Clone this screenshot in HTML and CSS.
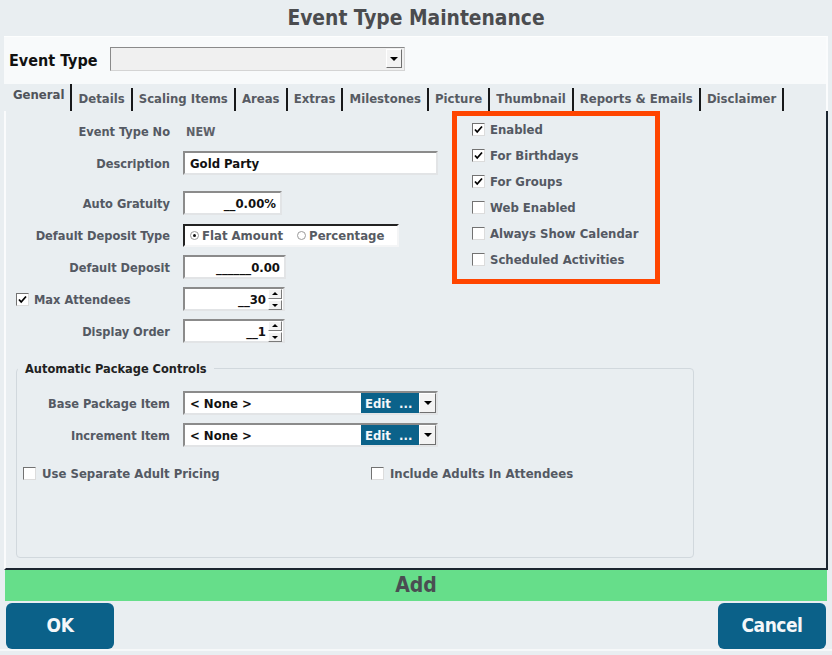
FILE: index.html
```html
<!DOCTYPE html>
<html lang="en">
<head>
<meta charset="UTF-8" />
<title>Event Type Maintenance</title>
<link rel="stylesheet" href="styles.css">
</head>
<body>

<div class="screen">
  <h1 class="title">Event Type Maintenance</h1>

  <div class="type-bar">
    <span class="type-label">Event Type</span>
    <div class="select"><span class="drop-btn"><i class="tri"></i></span></div>
  </div>

  <nav class="tabs">
    <span class="tab active">General</span>
    <span class="tab">Details</span>
    <span class="tab">Scaling Items</span>
    <span class="tab">Areas</span>
    <span class="tab">Extras</span>
    <span class="tab">Milestones</span>
    <span class="tab">Picture</span>
    <span class="tab">Thumbnail</span>
    <span class="tab">Reports &amp; Emails</span>
    <span class="tab">Disclaimer</span>
  </nav>

  <section class="tab-body">
    <div class="top-area">
      <div class="form-col">
        <div class="row">
          <span class="lbl">Event Type No</span>
          <span class="value">NEW</span>
        </div>
        <div class="row gap-after">
          <span class="lbl">Description</span>
          <div class="field w-desc left">Gold Party</div>
        </div>
        <div class="row">
          <span class="lbl">Auto Gratuity</span>
          <div class="field w-grat">__0.00%</div>
        </div>
        <div class="row">
          <span class="lbl">Default Deposit Type</span>
          <div class="radio-box">
            <span class="radio on"></span><span class="radio-text">Flat Amount</span>
            <span class="radio"></span><span class="radio-text">Percentage</span>
          </div>
        </div>
        <div class="row">
          <span class="lbl">Default Deposit</span>
          <div class="field w-dep">______0.00</div>
        </div>
        <div class="row">
          <span class="lbl lbl-check"><span class="cb checked"><svg viewBox="0 0 11 11"><path d="M2 5.5l2.2 2.5 4.8-5.5"/></svg></span>Max Attendees</span>
          <div class="field w-spin">__30<span class="spin"><i class="up"></i><i class="down"></i></span></div>
        </div>
        <div class="row">
          <span class="lbl">Display Order</span>
          <div class="field w-spin">__1<span class="spin"><i class="up"></i><i class="down"></i></span></div>
        </div>
      </div>

      <div class="flags">
        <div class="flag"><span class="cb checked"><svg viewBox="0 0 11 11"><path d="M2 5.5l2.2 2.5 4.8-5.5"/></svg></span>Enabled</div>
        <div class="flag"><span class="cb checked"><svg viewBox="0 0 11 11"><path d="M2 5.5l2.2 2.5 4.8-5.5"/></svg></span>For Birthdays</div>
        <div class="flag"><span class="cb checked"><svg viewBox="0 0 11 11"><path d="M2 5.5l2.2 2.5 4.8-5.5"/></svg></span>For Groups</div>
        <div class="flag"><span class="cb"></span>Web Enabled</div>
        <div class="flag"><span class="cb"></span>Always Show Calendar</div>
        <div class="flag"><span class="cb"></span>Scheduled Activities</div>
      </div>
    </div>

    <fieldset class="pkg">
      <legend>Automatic Package Controls</legend>
      <div class="row">
        <span class="lbl">Base Package Item</span>
        <div class="combo">
          <span class="combo-text">&lt; None &gt;</span>
          <span class="edit">Edit &nbsp;...</span>
          <span class="drop-btn"><i class="tri"></i></span>
        </div>
      </div>
      <div class="row">
        <span class="lbl">Increment Item</span>
        <div class="combo">
          <span class="combo-text">&lt; None &gt;</span>
          <span class="edit">Edit &nbsp;...</span>
          <span class="drop-btn"><i class="tri"></i></span>
        </div>
      </div>
      <div class="check-row">
        <span class="check-item first"><span class="cb"></span>Use Separate Adult Pricing</span>
        <span class="check-item"><span class="cb"></span>Include Adults In Attendees</span>
      </div>
    </fieldset>
  </section>

  <div class="add-bar">Add</div>

  <footer class="actions">
    <button class="btn">OK</button>
    <button class="btn">Cancel</button>
  </footer>
</div>

</body>
</html>
```

FILE: styles.css
```css
* {
  box-sizing: border-box;
}
body {
  margin: 0;
  background: #e9eef1;
  font-family: "DejaVu Sans Condensed", "DejaVu Sans", sans-serif;
  font-weight: bold;
  font-size: 13px;
  color: #545963;
}
.screen {
  height: 655px;
  overflow: hidden;
}

/* Title */
.title {
  margin: 0;
  height: 36px;
  line-height: 36px;
  text-align: center;
  font-size: 20.8px;
  color: #4b4c4f;
}

/* Event type selector */
.type-bar {
  height: 48px;
  margin: 0 4px;
  display: flex;
  align-items: center;
  padding-left: 5px;
  background: #f8fafb;
  border-top: 1px solid #fdfefe;
  border-right: 2px solid #fbfcfd;
}
.type-label {
  font-size: 16px;
  color: #111;
  width: 101px;
}
.select {
  width: 295px;
  height: 24px;
  margin-bottom: 4px;
  background: #f0f0f0;
  border: 1px solid;
  border-color: #8a8a8a #d4d4d4 #d4d4d4 #8a8a8a;
  display: flex;
  justify-content: flex-end;
  align-items: center;
  padding-right: 2px;
}
.drop-btn {
  width: 16px;
  height: 19px;
  background: #f3f3f3;
  border: 1px solid;
  border-color: #fff #6f6f6f #6f6f6f #fff;
  display: flex;
  align-items: center;
  justify-content: center;
}
.tri {
  width: 0;
  height: 0;
  border-left: 4px solid transparent;
  border-right: 4px solid transparent;
  border-top: 4px solid #000;
}

/* Tabs */
.tabs {
  height: 27px;
  margin: 0 4px;
  display: flex;
  align-items: flex-end;
  padding-left: 2px;
  border-right: 2px solid #fbfcfd;
}
.tab {
  height: 23px;
  line-height: 22px;
  padding: 0 6px 0 6.1px;
  border-right: 2px solid #17181a;
  color: #575b63;
}
.tab.active {
  height: 27px;
  line-height: 22px;
  padding-left: 7px;
  color: #4f535a;
}

/* Tab page */
.tab-body {
  height: 459px;
  margin: 0 4px;
  border-left: 2px solid #fafbfc;
  border-right: 2px solid #1c2630;
  border-bottom: 2px solid #1c2630;
}
.top-area {
  display: flex;
  align-items: flex-start;
}
.form-col {
  width: 446px;
  padding-top: 4px;
}
.row {
  height: 32px;
  display: flex;
  align-items: center;
}
.row.gap-after {
  margin-bottom: 8px;
}
.lbl {
  width: 164px;
  margin-right: 13px;
  text-align: right;
  white-space: nowrap;
  font-size: 12.7px;
}
.lbl-check {
  display: flex;
  align-items: center;
  text-align: left;
  padding-left: 10px;
}
.lbl-check .cb {
  margin-right: 5px;
}
.value {
  color: #5d6169;
  padding-left: 3px;
  font-size: 12.5px;
}
.field {
  height: 24px;
  background: #fff;
  border: 2px solid;
  border-color: #8b8b8b #e2e4e6 #e2e4e6 #8b8b8b;
  color: #111;
  display: flex;
  align-items: center;
  justify-content: flex-end;
  padding: 0 4px;
}
.field.left {
  justify-content: flex-start;
  padding-left: 5px;
}
.w-desc { width: 255px; }
.w-grat { width: 99px; }
.w-dep  { width: 103px; }
.w-spin { width: 102px; padding-right: 1px; }

.spin {
  display: flex;
  flex-direction: column;
  gap: 1px;
  margin-left: 2px;
}
.spin i {
  width: 14px;
  height: 10px;
  background: #f2f2f2;
  border: 1px solid;
  border-color: #fff #7a7a7a #7a7a7a #fff;
  position: relative;
}
.spin i::after {
  content: "";
  position: absolute;
  left: 3px;
  top: 2px;
  border-left: 3px solid transparent;
  border-right: 3px solid transparent;
}
.spin .up::after {
  border-bottom: 3px solid #000;
}
.spin .down::after {
  top: 3px;
  border-top: 3px solid #000;
}

.radio-box {
  width: 216px;
  height: 23px;
  background: #fff;
  border: 2px solid;
  border-color: #222 #f4f5f6 #f4f5f6 #222;
  display: flex;
  align-items: center;
  padding-left: 5px;
  white-space: nowrap;
}
.radio {
  flex: none;
  width: 9px;
  height: 9px;
  border-radius: 50%;
  border: 1px solid #9a9a9a;
  background: #fff;
  margin-right: 3px;
  display: flex;
  align-items: center;
  justify-content: center;
}
.radio.on::after {
  content: "";
  width: 3px;
  height: 3px;
  border-radius: 50%;
  background: #111;
}
.radio-text {
  flex: none;
  color: #575b63;
  margin-right: 14px;
}

/* Checkboxes */
.cb {
  width: 13px;
  height: 13px;
  flex: none;
  background: #fff;
  border: 1px solid;
  border-color: #727272 #dcdcdc #dcdcdc #727272;
  display: inline-flex;
}
.cb svg {
  width: 11px;
  height: 11px;
}
.cb path {
  fill: none;
  stroke: #000;
  stroke-width: 1.8;
}

.flags {
  width: 208px;
  height: 173px;
  border: 5px solid #ff4500;
  padding: 0 0 0 15px;
}
.flag {
  height: 26px;
  display: flex;
  align-items: center;
}
.flag .cb {
  margin-right: 5px;
}

/* Package group */
.pkg {
  margin: 14px 0 0 10px;
  width: 678px;
  height: 197px;
  border: 1px solid #d1d8dd;
  border-radius: 4px;
  padding: 11px 0 0 0;
}
.pkg legend {
  padding: 0 7px;
  margin-left: 1px;
  color: #222;
  font-size: 12.7px;
}
.pkg .lbl {
  width: 153px;
}
.combo {
  width: 255px;
  height: 24px;
  background: #fff;
  border: 2px solid;
  border-color: #8b8b8b #e2e4e6 #e2e4e6 #8b8b8b;
  display: flex;
  align-items: stretch;
}
.combo-text {
  flex: 1;
  display: flex;
  align-items: center;
  padding-left: 5px;
  color: #111;
}
.edit {
  width: 58px;
  background: #0b628a;
  color: #f4f8fa;
  display: flex;
  align-items: center;
  padding-left: 4px;
}
.combo .drop-btn {
  height: auto;
  width: 17px;
}
.check-row {
  display: flex;
  margin-top: 9px;
  height: 26px;
  align-items: center;
}
.check-item {
  display: flex;
  align-items: center;
}
.check-item .cb {
  margin-right: 6px;
}
.check-item.first {
  width: 354px;
  padding-left: 6px;
}

/* Add bar */
.add-bar {
  height: 31px;
  margin: 0 5px;
  background: #66de8a;
  text-align: center;
  line-height: 31px;
  font-family: "Liberation Sans Narrow", "DejaVu Sans Condensed", sans-serif;
  font-size: 21px;
  color: #4a4e52;
}

/* Footer buttons */
.actions {
  display: flex;
  justify-content: space-between;
  padding: 2px 6px 0 6px;
  height: 50px;
  border-bottom: 2px solid #f6f8f9;
}
.btn {
  width: 108px;
  height: 46px;
  border: none;
  border-radius: 6px;
  background: #0b6189;
  color: #f4f7f9;
  font-family: "Liberation Sans Narrow", "DejaVu Sans Condensed", sans-serif;
  font-weight: bold;
  font-size: 19px;
  letter-spacing: -0.5px;
  padding-bottom: 4px;
}
```
